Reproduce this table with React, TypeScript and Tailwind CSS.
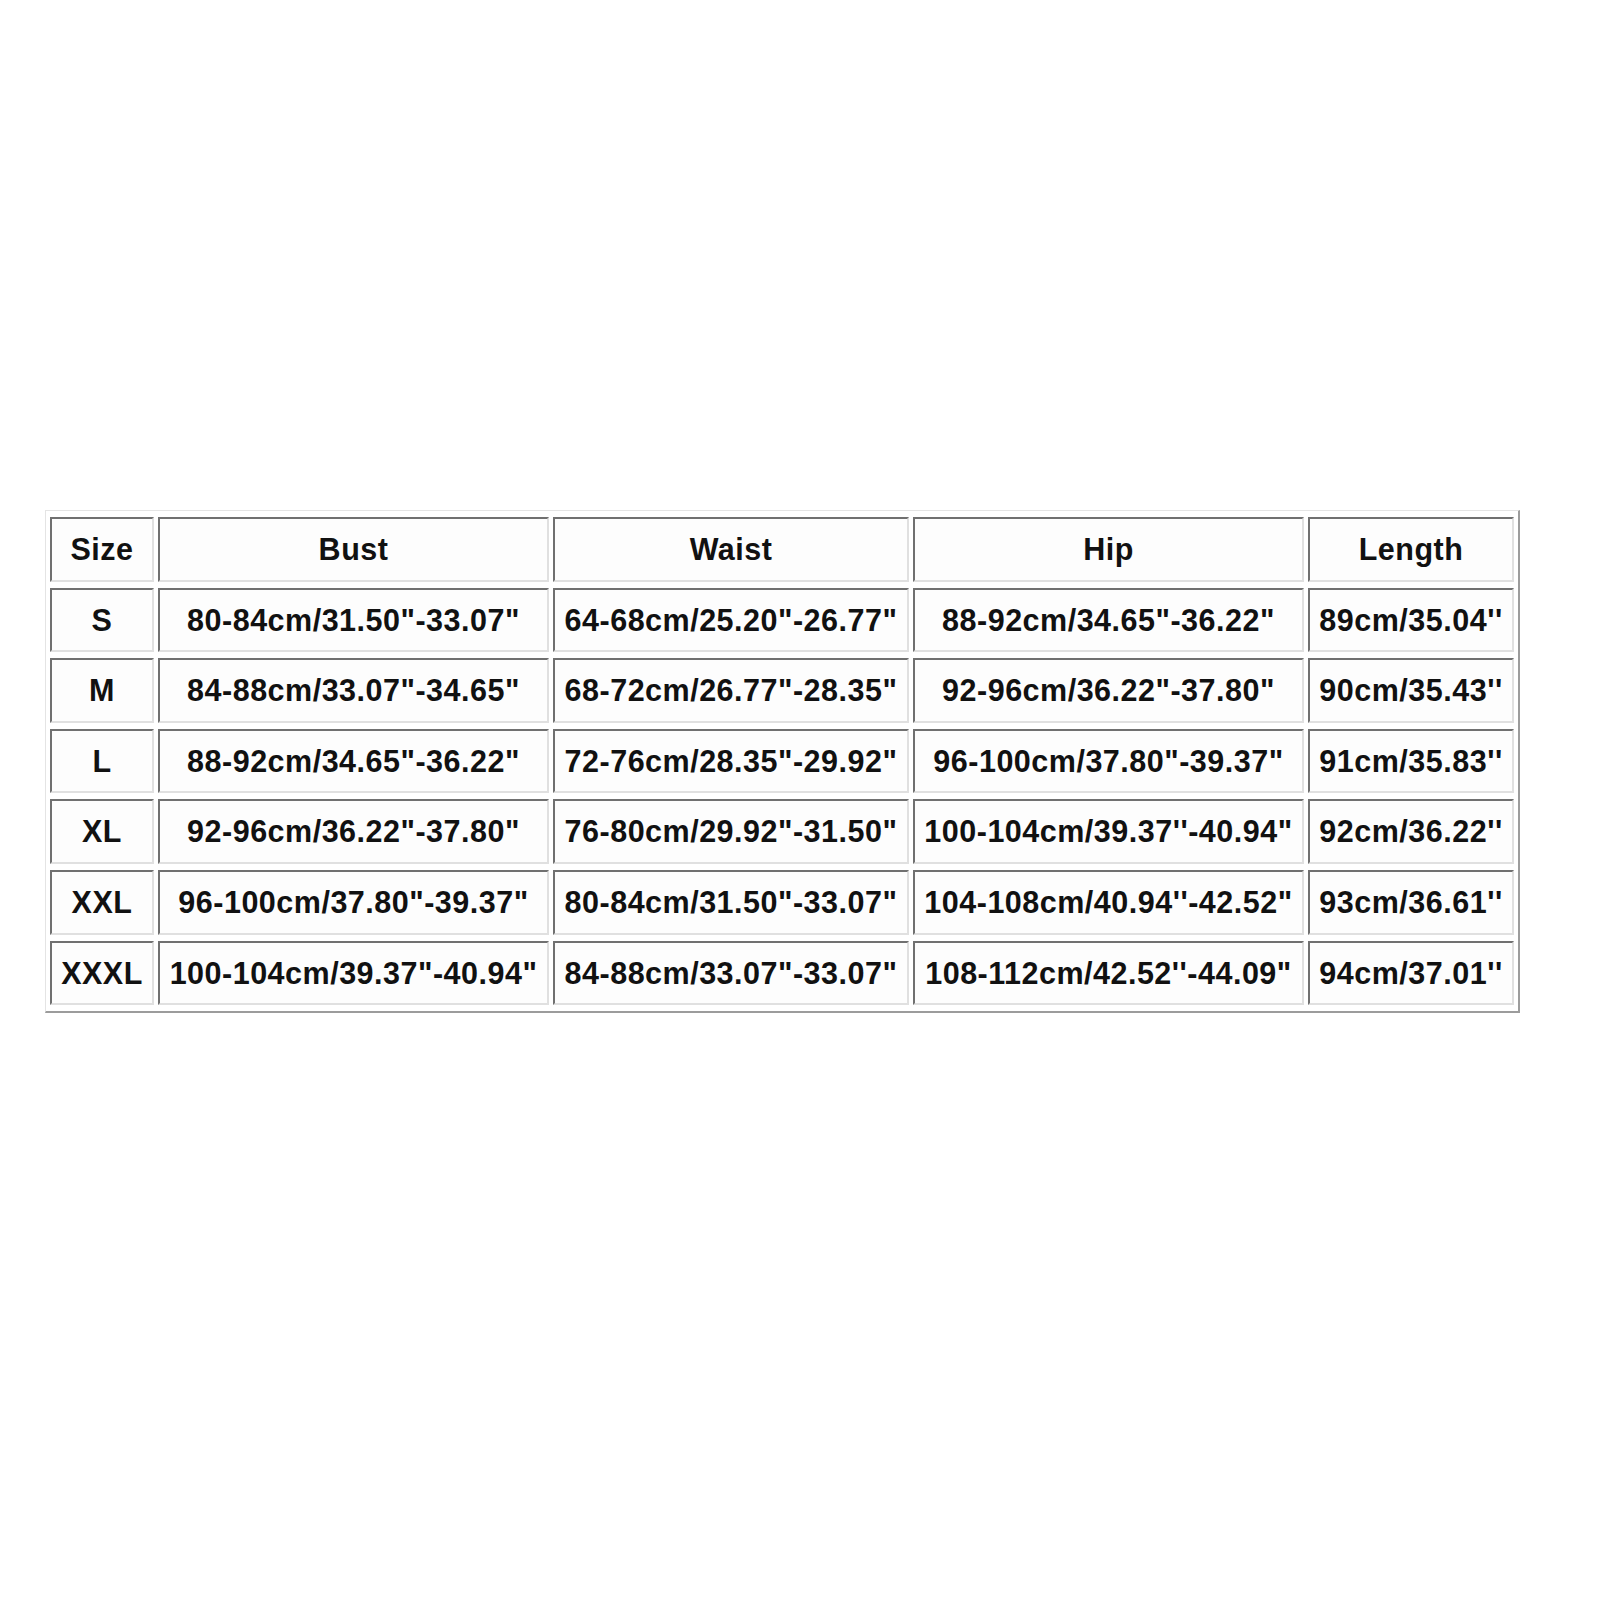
import React from 'react';

type Row = { size: string; bust: string; waist: string; hip: string; length: string };

const rows: Row[] = [
  { size: 'S', bust: '80-84cm/31.50"-33.07"', waist: '64-68cm/25.20"-26.77"', hip: '88-92cm/34.65"-36.22"', length: "89cm/35.04''" },
  { size: 'M', bust: '84-88cm/33.07"-34.65"', waist: '68-72cm/26.77"-28.35"', hip: '92-96cm/36.22"-37.80"', length: "90cm/35.43''" },
  { size: 'L', bust: '88-92cm/34.65"-36.22"', waist: '72-76cm/28.35"-29.92"', hip: '96-100cm/37.80"-39.37"', length: "91cm/35.83''" },
  { size: 'XL', bust: '92-96cm/36.22"-37.80"', waist: '76-80cm/29.92"-31.50"', hip: "100-104cm/39.37''-40.94\"", length: "92cm/36.22''" },
  { size: 'XXL', bust: '96-100cm/37.80"-39.37"', waist: '80-84cm/31.50"-33.07"', hip: "104-108cm/40.94''-42.52\"", length: "93cm/36.61''" },
  { size: 'XXXL', bust: '100-104cm/39.37"-40.94"', waist: '84-88cm/33.07"-33.07"', hip: "108-112cm/42.52''-44.09\"", length: "94cm/37.01''" },
];

// inset look: dark top/left, light bottom/right
const cell =
  'h-[64.6px] p-0 text-center align-middle whitespace-nowrap bg-[#fdfdfd] border-t-2 border-l-2 border-b-2 border-r-2 border-t-[#707070] border-l-[#707070] border-b-[#e0e0e0] border-r-[#e0e0e0]';

const App: React.FC = () => {
  return (
    <div className="min-h-[1600px] w-[1600px] bg-white pt-[510px] pl-[45px] font-['Liberation_Sans',Arial,sans-serif] text-[30.5px] font-bold leading-none tracking-[0.5px] text-[#111]">
      <table className="table-fixed border-separate [border-spacing:4px_6px] border-t border-l border-b-2 border-r-2 border-t-[#e4e4e4] border-l-[#e4e4e4] border-b-[#9c9c9c] border-r-[#9c9c9c] bg-white">
        <thead>
          <tr>
            <th className={`${cell} w-[104px]`}>Size</th>
            <th className={`${cell} w-[391px]`}>Bust</th>
            <th className={`${cell} w-[356px]`}>Waist</th>
            <th className={`${cell} w-[391px]`}>Hip</th>
            <th className={`${cell} w-[206px]`}>Length</th>
          </tr>
        </thead>
        <tbody>
          {rows.map(r => (
            <tr key={r.size}>
              <td className={cell}>{r.size}</td>
              <td className={cell}>{r.bust}</td>
              <td className={cell}>{r.waist}</td>
              <td className={cell}>{r.hip}</td>
              <td className={cell}>{r.length}</td>
            </tr>
          ))}
        </tbody>
      </table>
    </div>
  );
};

export default App;
